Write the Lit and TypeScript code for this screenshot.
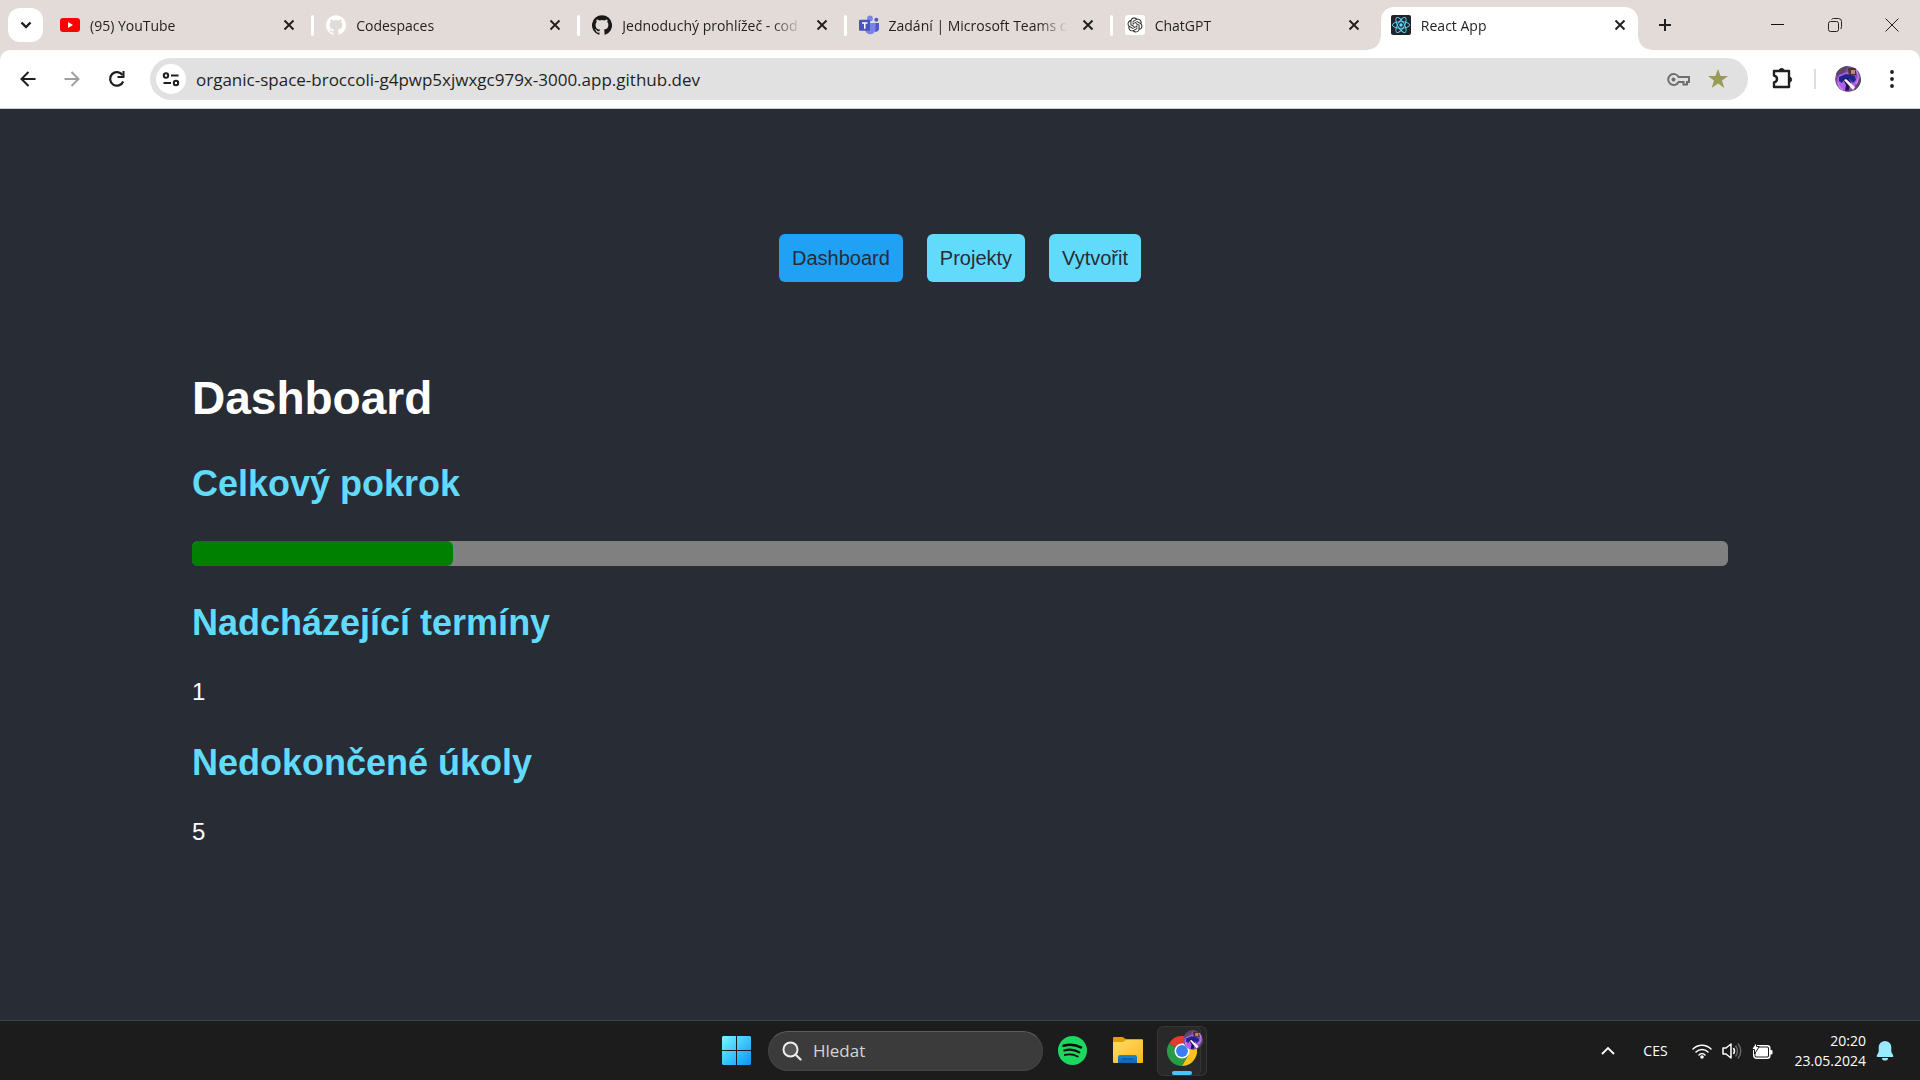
import { LitElement, html, css, svg } from "lit";
import { customElement, property } from "lit/decorators.js";

const OCTOCAT =
  "M12 .3a12 12 0 0 0-3.8 23.4c.6.1.8-.3.8-.6v-2c-3.3.7-4-1.6-4-1.6-.6-1.4-1.4-1.8-1.4-1.8-1-.7.1-.7.1-.7 1.2 0 1.9 1.2 1.9 1.2 1 1.8 2.8 1.3 3.5 1 0-.8.4-1.3.7-1.6-2.7-.3-5.5-1.3-5.5-6 0-1.2.5-2.3 1.3-3.1-.2-.4-.6-1.6 0-3.2 0 0 1-.3 3.4 1.2a11.5 11.5 0 0 1 6 0c2.3-1.5 3.3-1.2 3.3-1.2.6 1.6.2 2.8 0 3.2.9.8 1.3 1.9 1.3 3.2 0 4.6-2.8 5.6-5.5 5.9.5.4.9 1 .9 2.2v3.3c0 .3.1.7.8.6A12 12 0 0 0 12 .3";

const OPENAI =
  "M22.282 9.821a5.985 5.985 0 0 0-.516-4.91 6.046 6.046 0 0 0-6.51-2.9A6.065 6.065 0 0 0 4.981 4.18a5.985 5.985 0 0 0-3.998 2.9 6.046 6.046 0 0 0 .743 7.097 5.98 5.98 0 0 0 .51 4.911 6.051 6.051 0 0 0 6.515 2.9A5.985 5.985 0 0 0 13.26 24a6.056 6.056 0 0 0 5.772-4.206 5.99 5.99 0 0 0 3.997-2.9 6.056 6.056 0 0 0-.747-7.073zM13.26 22.43a4.476 4.476 0 0 1-2.876-1.04l.141-.081 4.779-2.758a.795.795 0 0 0 .392-.681v-6.737l2.02 1.168a.071.071 0 0 1 .038.052v5.583a4.504 4.504 0 0 1-4.494 4.494zM3.6 18.304a4.47 4.47 0 0 1-.535-3.014l.142.085 4.783 2.759a.771.771 0 0 0 .78 0l5.843-3.369v2.332a.08.08 0 0 1-.033.062L9.74 19.95a4.5 4.5 0 0 1-6.14-1.646zM2.34 7.896a4.485 4.485 0 0 1 2.366-1.973V11.6a.766.766 0 0 0 .388.676l5.815 3.355-2.02 1.168a.076.076 0 0 1-.071 0l-4.83-2.786A4.504 4.504 0 0 1 2.34 7.872zm16.597 3.855l-5.833-3.387L15.119 7.2a.076.076 0 0 1 .071 0l4.83 2.791a4.494 4.494 0 0 1-.676 8.105v-5.678a.79.79 0 0 0-.407-.667zm2.01-3.023l-.141-.085-4.774-2.782a.776.776 0 0 0-.785 0L9.409 9.23V6.897a.066.066 0 0 1 .028-.061l4.83-2.787a4.5 4.5 0 0 1 6.68 4.66zm-12.64 4.135l-2.02-1.164a.08.08 0 0 1-.038-.057V6.075a4.5 4.5 0 0 1 7.375-3.453l-.142.08L8.704 5.46a.795.795 0 0 0-.393.681zm1.097-2.365l2.602-1.5 2.607 1.5v2.999l-2.597 1.5-2.607-1.5z";

const avatarArt = svg`
  <circle cx="13" cy="13" r="13" fill="#79509a"/>
  <path d="M0 6 8 0h5L9 8l-6 3zM19 25l4-9 3-5v8z" fill="#5a4668"/>
  <path d="m4 9 8-3 9 4 2 6-5 6-9 3-5-5-2-6z" fill="#b45ce6"/>
  <path d="M13 2h8v7l-7 1z" fill="#4e3030"/>
  <path d="M16 4h4v4h-4z" fill="#b98a70"/>
  <path d="m4 11 7-3 9 2 1 4-3 3-4-4-5 1-2 3-3-2z" fill="#1b2590"/>
  <path d="m8 13 5-1 3 4-2 8-4 1 1-6z" fill="#1d1650"/>
  <path d="m9 14 2-1 9 8-2 3z" fill="#fff4ff"/>
  <path d="M21 4c3 4 3 10 0 14M3 16c0 3 2 6 5 8" fill="none" stroke="#d08af8" stroke-width="1.2"/>`;

const icons: Record<string, unknown> = {
  chevronDown: svg`<svg viewBox="0 0 20 20" width="20" height="20"><path d="m5.500 7.500 4.500 4.500 4.500-4.500" fill="none" stroke="#1f1f1f" stroke-width="2.400"/></svg>`,
  youtube: svg`<svg viewBox="0 0 20 20" width="20" height="20"><rect y="3" width="20" height="14" rx="3" fill="#f00"/><path d="m8 7 5 3-5 3z" fill="#fff"/></svg>`,
  githubLight: svg`<svg viewBox="0 0 24 24" width="20" height="20"><path fill="#fff" d=${OCTOCAT}/></svg>`,
  githubDark: svg`<svg viewBox="0 0 24 24" width="20" height="20"><path fill="#1b1818" d=${OCTOCAT}/></svg>`,
  teams: svg`<svg viewBox="0 0 20 20" width="20" height="20">
    <circle cx="17.300" cy="4.800" r="2" fill="#5059c9"/><path d="M14 8h6v6a3 3 0 0 1-5 2z" fill="#5059c9"/>
    <circle cx="11" cy="3.500" r="2.900" fill="#7b83eb"/><path d="M6 8h10.500v6a5.200 5.200 0 0 1-10.500 0z" fill="#7b83eb"/>
    <rect y="4.800" width="11" height="11" rx="1" fill="#4b53bc"/><path d="M3 7.300h5.500v1.500H6.500v5H5v-5H3z" fill="#fff"/></svg>`,
  openai: svg`<svg viewBox="0 0 20 20" width="20" height="20"><rect width="20" height="20" rx="3" fill="#fff"/><g transform="translate(2.500 2.500) scale(.625)"><path fill="#222" d=${OPENAI}/></g></svg>`,
  react: svg`<svg viewBox="0 0 20 20" width="20" height="20"><rect width="20" height="20" rx="2" fill="#20232a"/>
    <g fill="none" stroke="#61dafb" stroke-width=".9"><ellipse cx="10" cy="10" rx="8.600" ry="3.300"/><ellipse cx="10" cy="10" rx="8.600" ry="3.300" transform="rotate(60 10 10)"/><ellipse cx="10" cy="10" rx="8.600" ry="3.300" transform="rotate(120 10 10)"/></g><circle cx="10" cy="10" r="1.700" fill="#61dafb"/></svg>`,
  tabClose: svg`<svg viewBox="0 0 12 12" width="12" height="12"><path d="m1.500 1.500 9 9m0-9-9 9" stroke="#1f1f1f" stroke-width="1.900"/></svg>`,
  plus: svg`<svg viewBox="0 0 14 14" width="14" height="14"><path d="M7 1v12M1 7h12" stroke="#1f1f1f" stroke-width="2"/></svg>`,
  minimise: svg`<svg viewBox="0 0 14 14" width="14" height="14"><path d="M0 6.500h13" stroke="#111"/></svg>`,
  restore: svg`<svg viewBox="0 0 14 14" width="14" height="14"><rect x=".5" y="3.500" width="10" height="10" rx="2" fill="none" stroke="#222"/><path d="M3.500 1.500q1-1 2-1h5a3 3 0 0 1 3 3v5q0 2-1 2.500" fill="none" stroke="#222"/></svg>`,
  windowClose: svg`<svg viewBox="0 0 14 14" width="14" height="14"><path d="m.5.500 13 13m0-13-13 13" stroke="#222"/></svg>`,
  back: svg`<svg viewBox="0 0 20 20" width="20" height="20"><path d="M17.500 10H4M10.500 3 3.500 10l7 7" fill="none" stroke="#1f1f1f" stroke-width="2"/></svg>`,
  forward: svg`<svg viewBox="0 0 20 20" width="20" height="20"><path d="M2.500 10H16M9.500 3l7 7-7 7" fill="none" stroke="#a0a0a0" stroke-width="2"/></svg>`,
  reload: svg`<svg viewBox="0 0 20 20" width="20" height="20"><path d="M17.200 12.500A6.800 6.800 0 1 1 16.500 6" fill="none" stroke="#1f1f1f" stroke-width="2.200"/><path d="M18.500 2v7h-7V7h5V2z" fill="#1f1f1f"/></svg>`,
  tune: svg`<svg viewBox="0 0 20 20" width="20" height="20"><g fill="none" stroke="#1f1f1f" stroke-width="2"><circle cx="5" cy="6.500" r="2.200"/><path d="M10 6.500h7.500M2.500 14H10"/><circle cx="15" cy="14" r="2.200"/></g></svg>`,
  key: svg`<svg viewBox="0 0 24 24" width="24" height="24"><g fill="none" stroke="#6e6e6e" stroke-width="2"><path d="M12.600 10H23v5h-2v2.500h-3.500V15h-4.900A5.500 5.500 0 1 1 12.600 10z"/></g><circle cx="7.500" cy="12.500" r="2" fill="#6e6e6e"/></svg>`,
  star: svg`<svg viewBox="0 0 22 22" width="22" height="22"><path d="m11 1 2.600 7H21l-6 4.600 2.300 7.400-6.300-4.500L4.700 20 7 12.600 1 8h7.400z" fill="#9a9a57"/></svg>`,
  puzzle: svg`<svg viewBox="0 0 24 24" width="24" height="24"><path d="M4 4h15v16H4v-4.500q3-.8 3-3.500T4 8.500z" fill="none" stroke="#1f1f1f" stroke-width="2.400" stroke-linejoin="round"/><path d="M9 4a2.600 2.600 0 0 1 5.200 0zM19 10a2.600 2.600 0 0 1 0 5.200z" fill="#1f1f1f" stroke="#1f1f1f"/></svg>`,
  avatar: svg`<svg viewBox="0 0 26 26" width="26" height="26"><clipPath id="av"><circle cx="13" cy="13" r="13"/></clipPath><g clip-path="url(#av)">${avatarArt}</g></svg>`,
  dots: svg`<svg viewBox="0 0 20 20" width="20" height="20"><g fill="#1f1f1f"><circle cx="10" cy="3" r="1.900"/><circle cx="10" cy="10" r="1.900"/><circle cx="10" cy="17" r="1.900"/></g></svg>`,
  windows: svg`<svg viewBox="0 0 29 29" width="29" height="29"><linearGradient id="wg" x1="0" y1="0" x2="29" y2="29" gradientUnits="userSpaceOnUse"><stop stop-color="#7df4ff"/><stop offset=".5" stop-color="#3cc6fc"/><stop offset="1" stop-color="#0a94f6"/></linearGradient><path fill="url(#wg)" d="M1 0h13v14H0V1zM15 0h13l1 1v13H15zM0 15h14v14H1l-1-1zM15 15h14v13l-1 1H15z"/></svg>`,
  search: svg`<svg viewBox="0 0 20 20" width="20" height="20"><circle cx="8.500" cy="8.500" r="7" fill="#555" stroke="#eee" stroke-width="2"/><path d="m13.500 13.500 5 5" stroke="#e4e4e4" stroke-width="2.400" stroke-linecap="round"/></svg>`,
  spotify: svg`<svg viewBox="0 0 24 24" width="29" height="29"><circle cx="12" cy="12" r="12" fill="#1ed760"/><g fill="none" stroke="#0c0c0c" stroke-linecap="round"><path d="M4.600 8.100c4.600-1.300 10.200-.9 14.400 1.400" stroke-width="2.100"/><path d="M5.200 12c4-1.200 8.800-.7 12.500 1.500" stroke-width="1.800"/><path d="M5.700 15.700c3.600-1 7.400-.6 10.600 1.300" stroke-width="1.500"/></g></svg>`,
  folder: svg`<svg viewBox="0 0 30 27" width="30" height="27"><linearGradient id="fg" x1="0" y1="0" x2="1" y2="1"><stop stop-color="#ffdc6e"/><stop offset="1" stop-color="#fbb910"/></linearGradient><linearGradient id="fb" x1="0" y1="0" x2="0" y2="1"><stop stop-color="#1a87d8"/><stop offset="1" stop-color="#0f63b4"/></linearGradient><path d="M0 1q0-1 1-1h8q1 0 2 1l2 1h16q1 0 1 1v8H0z" fill="#dfa00c"/><path d="M0 5h10l3-2h16q1 0 1 1v21q0 1-1 1H1q-1 0-1-1z" fill="url(#fg)"/><path d="M5 26v-6q0-2 2-2h15q2 0 2 2v6z" fill="url(#fb)"/><path d="M9 22h11" stroke="#0b4c8c"/></svg>`,
  chrome: svg`<svg viewBox="0 0 48 48" width="30" height="30"><path d="M24 24 3.200 12A24 24 0 0 1 44.800 12z" fill="#e33b2e"/><path d="M24 24h-.1L3.200 12A24 24 0 0 0 24 48l10.400-18z" fill="#2a9a47"/><path d="M24 12h20.800A24 24 0 0 1 24 48l10.400-18z" fill="#fcc31e"/><circle cx="24" cy="24" r="12" fill="#fff"/><circle cx="24" cy="24" r="9.500" fill="#3a7df0"/></svg>`,
  chromeBadge: svg`<svg viewBox="0 0 26 26" width="20" height="20"><clipPath id="cb"><circle cx="13" cy="13" r="13"/></clipPath><g clip-path="url(#cb)">${avatarArt}</g></svg>`,
  chevronUp: svg`<svg viewBox="0 0 16 16" width="16" height="16"><path d="m2 11 6-6 6 6" fill="none" stroke="#fff" stroke-width="1.800"/></svg>`,
  wifi: svg`<svg viewBox="0 0 20 16" width="20" height="16"><g fill="none" stroke="#fff" stroke-width="1.500" stroke-linecap="round"><path d="M1 6a12.500 12.500 0 0 1 18 0M4 9a8.500 8.500 0 0 1 12 0M7 12a4.300 4.300 0 0 1 6 0"/></g><circle cx="10" cy="14" r="1.800" fill="#fff"/></svg>`,
  volume: svg`<svg viewBox="0 0 20 18" width="20" height="18"><path d="M1 6h3l5-4v14l-5-4H1z" fill="none" stroke="#fff" stroke-width="1.500" stroke-linejoin="round"/><path d="M11.500 6q2 3 0 6" fill="none" stroke="#fff" stroke-width="1.500"/><path d="M13.500 3.500q4 5.500 0 11M16 1.500q5.500 7.500 0 15" fill="none" stroke="#6a6a6a" stroke-width="1.400"/></svg>`,
  battery: svg`<svg viewBox="0 0 21 18" width="21" height="18"><rect x="1.800" y="3.800" width="16" height="12.500" rx="2.500" fill="none" stroke="#fff" stroke-width="1.500"/><rect x="3.500" y="5.500" width="12.500" height="9" rx="1" fill="#fff"/><path d="M18 8h1.500q1 0 1 1v2.500q0 1-1 1H18z" fill="#fff"/><path d="M4.500 0v4.500h2.800L2.500 12V7.500H-.3z" fill="#fff" stroke="#1c1c1c"/></svg>`,
  bell: svg`<svg viewBox="0 0 18 20" width="18" height="20"><path d="M9 0a6.300 6.300 0 0 1 6.300 6.300v4.500l2 4q.2 1.200-1 1.200H1.700q-1.200 0-1-1.200l2-4V6.300A6.300 6.300 0 0 1 9 0zM6 17h6a3 2.600 0 0 1-6 0z" fill="#98eaff"/></svg>`,
};

const UI_FONT = css`"Open Sans", "Noto Sans", sans-serif`;

const reset = css`
  *, *::before, *::after { box-sizing: border-box; }
  button { border: 0; padding: 0; background: none; color: inherit; font: inherit; }
  svg { display: block; flex: none; }
`;

interface Tab { icon: string; title: string; active?: boolean; }

const TABS: Tab[] = [
  { icon: "youtube", title: "(95) YouTube" },
  { icon: "githubLight", title: "Codespaces" },
  { icon: "githubDark", title: "Jednoduchý prohlížeč - cod" },
  { icon: "teams", title: "Zadání | Microsoft Teams cl" },
  { icon: "openai", title: "ChatGPT" },
  { icon: "react", title: "React App", active: true },
];

@customElement("tab-strip")
class TabStrip extends LitElement {
  static styles = [reset, css`
    :host { display: flex; height: 50px; background: #e3dbd8; font: 14px/20px ${UI_FONT}; color: #1f1f1f; }
    .menu { width: 35px; height: 34px; margin: 8px 7px 0 8px; border-radius: 12px; background: #fff; display: grid; place-items: center; flex: none; }
    .tabs { display: flex; flex: 0 1 1597px; min-width: 0; }
    .tab { flex: 1 1 0; min-width: 0; display: flex; align-items: center; gap: 10px; padding: 0 12px 7px 10px; position: relative; margin: 7px 9px 0 0; border-radius: 13px 13px 0 0; }
    .tab + .tab:not(.active)::before { content: ""; position: absolute; left: -5px; top: 8px; width: 3px; height: 21px; border-radius: 2px; background: #fff; }
    .active { background: #fff; }
    .active::before, .active::after { content: ""; position: absolute; bottom: 0; width: 13px; height: 13px; }
    .active::before { right: 100%; background: radial-gradient(circle at 0 0, #e3dbd8 12px, #fff 13px); }
    .active::after { left: 100%; background: radial-gradient(circle at 100% 0, #e3dbd8 12px, #fff 13px); }
    .title { flex: 1; min-width: 0; margin-right: 4px; padding-top: 2px; overflow: hidden; white-space: nowrap; mask-image: linear-gradient(90deg, #000 calc(100% - 30px), transparent); }
    .new { width: 35px; display: grid; place-items: center; }
    .window { margin-left: auto; display: flex; }
    .window button { width: 57px; display: grid; place-items: center; }
  `];
  render() {
    return html`
      <button class="menu" aria-label="Hledat karty">${icons.chevronDown}</button>
      <div class="tabs" role="tablist">
        ${TABS.map((t) => html`
          <div class="tab ${t.active ? "active" : ""}" role="tab" aria-selected=${t.active ? "true" : "false"}>
            ${icons[t.icon]}<span class="title">${t.title}</span>
            <button aria-label="Zavřít">${icons.tabClose}</button>
          </div>`)}
      </div>
      <button class="new" aria-label="Nová karta">${icons.plus}</button>
      <div class="window">
        <button aria-label="Minimalizovat">${icons.minimise}</button>
        <button aria-label="Obnovit">${icons.restore}</button>
        <button aria-label="Zavřít okno">${icons.windowClose}</button>
      </div>`;
  }
}

@customElement("address-bar")
class AddressBar extends LitElement {
  static styles = [reset, css`
    :host { display: block; background: #e3dbd8; }
    .bar { display: flex; align-items: center; height: 59px; padding: 0 6px; background: #fff; border-radius: 10px 10px 0 0; border-bottom: 1px solid #c4d0cf; }
    .tool { width: 44px; height: 40px; display: grid; place-items: center; flex: none; }
    .omnibox { flex: 1; min-width: 0; display: flex; align-items: center; height: 42px; margin: 0 12px; padding: 0 19px 0 6px; border-radius: 21px; background: #e1e1e1; }
    .site { width: 30px; height: 30px; border-radius: 50%; background: #fff; display: grid; place-items: center; }
    input { flex: 1; min-width: 0; border: 0; outline: 0; background: none; padding: 1px 10px 0; color: #1f1f1f; font: 17px/24px ${UI_FONT}; }
    .actions { display: flex; align-items: center; gap: 17px; }
    .divider { width: 2px; height: 20px; background: #e3dbd8; margin: 0 10px; }
  `];
  render() {
    return html`<div class="bar">
      <button class="tool" aria-label="Zpět">${icons.back}</button>
      <button class="tool" aria-label="Vpřed">${icons.forward}</button>
      <button class="tool" aria-label="Obnovit stránku">${icons.reload}</button>
      <div class="omnibox">
        <button class="site" aria-label="Informace o webu">${icons.tune}</button>
        <input aria-label="Adresa" value="organic-space-broccoli-g4pwp5xjwxgc979x-3000.app.github.dev" />
        <div class="actions">
          <button aria-label="Hesla">${icons.key}</button>
          <button aria-label="Záložka">${icons.star}</button>
        </div>
      </div>
      <button class="tool" aria-label="Rozšíření">${icons.puzzle}</button>
      <span class="divider"></span>
      <button class="tool" aria-label="Profil">${icons.avatar}</button>
      <button class="tool" aria-label="Nabídka">${icons.dots}</button>
    </div>`;
  }
}

@customElement("dashboard-page")
class DashboardPage extends LitElement {
  @property({ type: Number }) progress = 17;
  static styles = [reset, css`
    :host { display: block; background: #282c34; color: #fff; font: 24px/28px "Liberation Sans", Arial, sans-serif; }
    nav { display: flex; justify-content: center; gap: 24px; padding-top: 125px; }
    a { padding: 12px 13px; border-radius: 6px; background: #61dafb; color: #282c34; font-size: 20px; line-height: 24px; text-decoration: none; }
    a.current { background: #21a1f3; }
    main { width: 80%; margin: 89px auto 0; }
    h1 { margin: 0 0 38px; font-size: 46px; line-height: 54px; }
    h2 { margin: 36px 0 34px; font-size: 36px; line-height: 42px; color: #61dafb; }
    p { margin: 0; }
    .track { height: 25px; margin-top: 36px; border-radius: 6px; background: gray; }
    .fill { height: 100%; border-radius: 6px; background: green; }
  `];
  render() {
    return html`
      <nav><a class="current" href="#dashboard">Dashboard</a><a href="#projekty">Projekty</a><a href="#vytvorit">Vytvořit</a></nav>
      <main>
        <h1>Dashboard</h1>
        <h2>Celkový pokrok</h2>
        <div class="track" role="progressbar" aria-label="Celkový pokrok" aria-valuenow=${this.progress}>
          <div class="fill" style="width:${this.progress}%"></div>
        </div>
        <h2>Nadcházející termíny</h2>
        <p>1</p>
        <h2>Nedokončené úkoly</h2>
        <p>5</p>
      </main>`;
  }
}

@customElement("task-bar")
class TaskBar extends LitElement {
  static styles = [reset, css`
    :host { box-sizing: border-box; display: grid; grid-template-columns: 1fr auto 1fr; align-items: center; height: 60px; background: #1c1c1c; border-top: 1px solid #424242; color: #fff; font: 14px/20px ${UI_FONT}; }
    .apps { grid-column: 2; display: flex; align-items: center; }
    .app { width: 55px; height: 50px; display: grid; place-items: center; }
    .search { display: flex; align-items: center; gap: 11px; width: 275px; height: 40px; margin: 0 2px 0 4px; padding: 0 13px; border-radius: 20px; background: #3b3b3b; border: 1px solid #464646; border-top-color: #5c5c5c; }
    input { flex: 1; min-width: 0; border: 0; outline: 0; padding: 1px 0 0; background: none; color: #d4d4d4; font: 17px/24px ${UI_FONT}; }
    input::placeholder { color: #d4d4d4; opacity: 1; }
    .open { position: relative; width: 44px; margin: 0 10px 0 2px; border-radius: 6px; background: #292929; border: 1px solid #363636; box-shadow: 6px 0 0 -1px #242424, 6px 0 0 0 #363636; padding-left: 6px; }
    .open::after { content: ""; position: absolute; left: 14px; bottom: 0; width: 20px; height: 4px; border-radius: 2px; background: #4cc2ff; }
    .badge { position: absolute; left: 25px; top: 3px; }
    .tray { grid-column: 3; justify-self: end; display: flex; align-items: center; padding-right: 26px; }
    .lang { margin: 0 24px 0 27px; }
    .status { display: flex; align-items: center; gap: 10px; }
    .clock { margin: 0 10px 0 22px; text-align: right; }
    .clock time { display: block; }
  `];
  render() {
    return html`
      <div class="apps">
        <button class="app" aria-label="Start">${icons.windows}</button>
        <label class="search">${icons.search}<input placeholder="Hledat" aria-label="Hledat" /></label>
        <button class="app" aria-label="Spotify">${icons.spotify}</button>
        <button class="app" aria-label="Průzkumník souborů">${icons.folder}</button>
        <button class="app open" aria-label="Google Chrome">${icons.chrome}<span class="badge">${icons.chromeBadge}</span></button>
      </div>
      <div class="tray">
        <button aria-label="Skryté ikony">${icons.chevronUp}</button>
        <span class="lang">CES</span>
        <button class="status" aria-label="Rychlá nastavení">${icons.wifi}${icons.volume}${icons.battery}</button>
        <div class="clock"><time>20:20</time><time>23.05.2024</time></div>
        <button aria-label="Oznámení">${icons.bell}</button>
      </div>`;
  }
}

@customElement("app-root")
class AppRoot extends LitElement {
  static styles = css`
    :host { display: flex; flex-direction: column; min-height: 100vh; }
    dashboard-page { flex: 1; }
  `;
  render() {
    return html`<tab-strip></tab-strip><address-bar></address-bar><dashboard-page></dashboard-page><task-bar></task-bar>`;
  }
}
